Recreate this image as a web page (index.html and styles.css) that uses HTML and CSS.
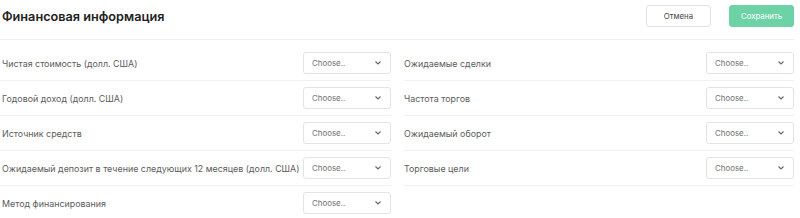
FILE: index.html
```html
<!DOCTYPE html>
<html lang="ru">
<head>
    <meta charset="UTF-8">
    <title>Финансовая информация</title>
    <link rel="stylesheet" href="styles.css">
</head>
<body>
    <div class="finance-panel">
        <div class="panel-header">
            <h2>Финансовая информация</h2>
            <div class="header-actions">
                <button class="btn btn-cancel">Отмена</button>
                <button class="btn btn-save">Сохранить</button>
            </div>
        </div>

        <div class="fields-grid">
            <div class="field-col">
                <div class="field-row">
                    <span class="field-label">Чистая стоимость (долл. США)</span>
                    <div class="select-box">Choose..<svg viewBox="0 0 10 6"><path d="M2.5 1.5l2.5 2.5 2.5-2.5"/></svg></div>
                </div>
                <div class="field-row">
                    <span class="field-label">Годовой доход (долл. США)</span>
                    <div class="select-box">Choose..<svg viewBox="0 0 10 6"><path d="M2.5 1.5l2.5 2.5 2.5-2.5"/></svg></div>
                </div>
                <div class="field-row">
                    <span class="field-label">Источник средств</span>
                    <div class="select-box">Choose..<svg viewBox="0 0 10 6"><path d="M2.5 1.5l2.5 2.5 2.5-2.5"/></svg></div>
                </div>
                <div class="field-row">
                    <span class="field-label">Ожидаемый депозит в течение следующих 12 месяцев (долл. США)</span>
                    <div class="select-box">Choose..<svg viewBox="0 0 10 6"><path d="M2.5 1.5l2.5 2.5 2.5-2.5"/></svg></div>
                </div>
                <div class="field-row last">
                    <span class="field-label">Метод финансирования</span>
                    <div class="select-box">Choose..<svg viewBox="0 0 10 6"><path d="M2.5 1.5l2.5 2.5 2.5-2.5"/></svg></div>
                </div>
            </div>

            <div class="field-col">
                <div class="field-row">
                    <span class="field-label">Ожидаемые сделки</span>
                    <div class="select-box">Choose..<svg viewBox="0 0 10 6"><path d="M2.5 1.5l2.5 2.5 2.5-2.5"/></svg></div>
                </div>
                <div class="field-row">
                    <span class="field-label">Частота торгов</span>
                    <div class="select-box">Choose..<svg viewBox="0 0 10 6"><path d="M2.5 1.5l2.5 2.5 2.5-2.5"/></svg></div>
                </div>
                <div class="field-row">
                    <span class="field-label">Ожидаемый оборот</span>
                    <div class="select-box">Choose..<svg viewBox="0 0 10 6"><path d="M2.5 1.5l2.5 2.5 2.5-2.5"/></svg></div>
                </div>
                <div class="field-row">
                    <span class="field-label">Торговые цели</span>
                    <div class="select-box">Choose..<svg viewBox="0 0 10 6"><path d="M2.5 1.5l2.5 2.5 2.5-2.5"/></svg></div>
                </div>
            </div>
        </div>
    </div>
</body>
</html>
```

FILE: styles.css
```css
body {
    font-family: Inter, "Noto Sans", sans-serif;
    background: #fff;
    margin: 0;
    padding: 0;
}

.finance-panel {
    width: 794px;
}

.panel-header {
    display: flex;
    justify-content: space-between;
    align-items: center;
    height: 39px;
    border-bottom: 1px solid #efefef;
}

.panel-header h2 {
    margin: 0 0 7px 2px;
    font-size: 12.7px;
    font-weight: 600;
    color: #222;
}

.header-actions {
    display: flex;
    gap: 18px;
    margin-bottom: 8px;
}

.btn {
    font-family: Inter, sans-serif;
    font-size: 7.8px;
    height: 22px;
    width: 65px;
    border-radius: 3px;
    cursor: pointer;
}

.btn-cancel {
    background: #fff;
    border: 1px solid #e2e2e2;
    color: #444;
}

.btn-save {
    background: #6dd3a7;
    border: 1px solid #6dd3a7;
    color: #fff;
}

/* Fields */
.fields-grid {
    display: grid;
    grid-template-columns: 391px 390px;
    gap: 13px;
    padding-top: 6px;
}

.field-row {
    display: flex;
    justify-content: space-between;
    align-items: center;
    height: 34px;
    border-bottom: 1px solid #f1f1f1;
}

.field-row.last {
    border-bottom-color: transparent;
}

.field-label {
    font-size: 8.9px;
    color: #5c5c5c;
    padding-left: 2px;
    white-space: nowrap;
}

.field-col + .field-col .field-label {
    padding-left: 0;
}

.select-box {
    box-sizing: border-box;
    flex-shrink: 0;
    width: 88px;
    height: 22px;
    border: 1px solid #e3e3e3;
    border-radius: 3px;
    display: flex;
    justify-content: space-between;
    align-items: center;
    padding: 0 7px 0 8px;
    font-size: 7.9px;
    color: #707070;
}

.select-box svg {
    width: 10px;
    height: 6px;
    fill: none;
    stroke: #666;
    stroke-width: 1.1;
}
```
